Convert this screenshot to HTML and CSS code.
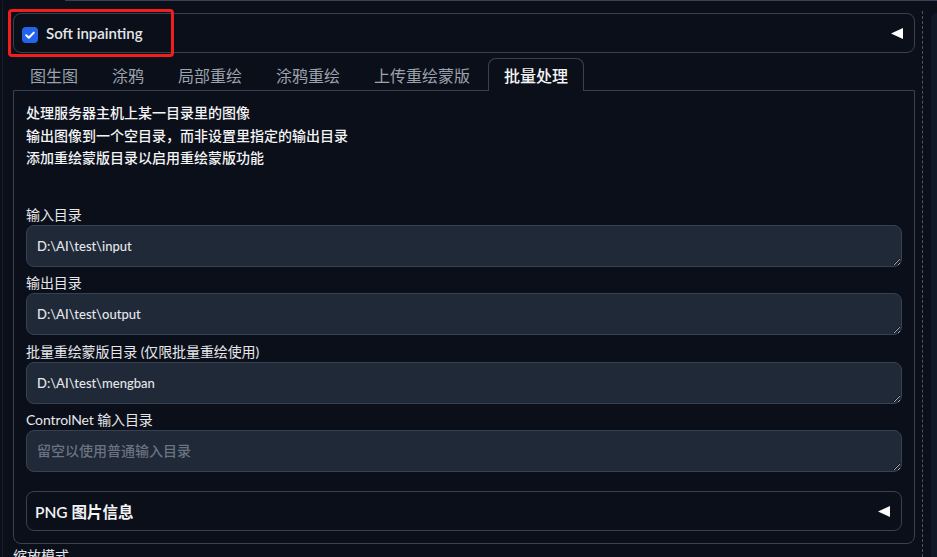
FILE: index.html
```html
<!DOCTYPE html>
<html lang="zh">
<head>
<meta charset="utf-8">
<title>批量处理</title>
<link rel="stylesheet" href="styles.css">
</head>
<body>
<div class="page">
  <div class="top-edge"></div>
  <div class="row">
    <div class="left-strip"></div>
    <main class="main">
      <div class="accordion soft">
        <label class="check-label">
          <span class="checkbox">
            <svg viewBox="0 0 16 16" width="16" height="16"><path d="M4.2 8.3 L6.8 10.8 L11.8 5.6" fill="none" stroke="#fff" stroke-width="2" stroke-linecap="round" stroke-linejoin="round"/></svg>
          </span>
          <span class="check-text">Soft inpainting</span>
        </label>
        <svg class="caret" viewBox="0 0 12 11" width="12" height="11"><polygon points="0,5.5 12,0 12,11" fill="#fff"/></svg>
        <div class="highlight"></div>
      </div>

      <nav class="tabs">
        <button class="tab">图生图</button>
        <button class="tab">涂鸦</button>
        <button class="tab">局部重绘</button>
        <button class="tab">涂鸦重绘</button>
        <button class="tab">上传重绘蒙版</button>
        <button class="tab active">批量处理</button>
      </nav>

      <section class="panel">
        <div class="desc">
          <p>处理服务器主机上某一目录里的图像</p>
          <p>输出图像到一个空目录，而非设置里指定的输出目录</p>
          <p>添加重绘蒙版目录以启用重绘蒙版功能</p>
        </div>
        <div class="fields">
          <label class="field">
            <span class="field-label">输入目录</span>
            <textarea class="input" rows="1">D:\AI\test\input</textarea>
          </label>
          <label class="field">
            <span class="field-label">输出目录</span>
            <textarea class="input" rows="1">D:\AI\test\output</textarea>
          </label>
          <label class="field">
            <span class="field-label">批量重绘蒙版目录 (仅限批量重绘使用)</span>
            <textarea class="input" rows="1">D:\AI\test\mengban</textarea>
          </label>
          <label class="field">
            <span class="field-label">ControlNet 输入目录</span>
            <textarea class="input" rows="1" placeholder="留空以使用普通输入目录"></textarea>
          </label>
        </div>
        <div class="accordion png">
          <span class="png-title">PNG 图片信息</span>
          <svg class="caret" viewBox="0 0 12 11" width="12" height="11"><polygon points="0,5.5 12,0 12,11" fill="#fff"/></svg>
        </div>
      </section>
      <div class="next-label">缩放模式</div>
    </main>
    <div class="divider"></div>
    <aside class="side"></aside>
  </div>
</div>
</body>
</html>
```

FILE: styles.css
```css
* { box-sizing: border-box; }
html, body {
  margin: 0;
  padding: 0;
  background: #0b0f19;
  height: 557px;
  overflow: hidden;
}
body {
  font-family: "Lato", "Noto Sans CJK SC", "Noto Sans", sans-serif;
  color: #e5e7eb;
  font-size: 14px;
}
.page {
  display: flex;
  flex-direction: column;
  height: 557px;
}
.top-edge {
  height: 1px;
  margin-left: 65px;
  background: #374151;
  flex: none;
}
.row {
  display: flex;
  flex: 1;
  min-height: 0;
}
.left-strip {
  width: 3px;
  flex: none;
  border-right: 1px solid #161c28;
}
.main {
  width: 902px;
  margin-left: 10px;
  flex: none;
}
.accordion {
  position: relative;
  display: flex;
  align-items: center;
  justify-content: space-between;
  height: 40px;
  border: 1px solid #374151;
  border-radius: 8px;
}
.soft {
  margin-top: 12px;
  padding: 3px 11px 0 8px;
}
.check-label {
  display: flex;
  align-items: center;
  gap: 8px;
}
.checkbox {
  width: 16px;
  height: 16px;
  border-radius: 4px;
  background: #2563eb;
  display: flex;
}
.check-text {
  font-size: 15px;
  font-weight: 600;
  color: #e5e7eb;
  margin-top: -3px;
}
.caret { display: block; }
.soft .caret { margin-top: -3px; }
.highlight {
  position: absolute;
  left: -6px;
  top: -5px;
  width: 166px;
  height: 48px;
  border: 3px solid #f21d1d;
  border-radius: 4px;
  pointer-events: none;
}
.tabs {
  display: flex;
  gap: 2px;
  margin-top: 5px;
  padding-left: 1px;
  height: 32px;
}
.tab {
  font-family: "Noto Sans CJK SC", sans-serif;
  font-size: 16px;
  color: #9ca3af;
  background: transparent;
  border: 1px solid transparent;
  border-bottom: none;
  padding: 0 15px;
  height: 33px;
  line-height: 31px;
  margin: 0;
  border-radius: 8px 8px 0 0;
  cursor: pointer;
}
.tab.active {
  color: #f3f4f6;
  font-weight: 500;
  border-color: #374151;
  background: #0b0f19;
  position: relative;
  z-index: 1;
}
.panel {
  border: 1px solid #374151;
  border-radius: 0 0 8px 8px;
  padding: 10px 12px 12px;
}
.desc {
  font-family: "Noto Sans CJK SC", sans-serif;
  font-size: 14px;
  line-height: 22.5px;
  color: #f3f4f6;
  font-weight: 500;
  margin-bottom: 36px;
}
.desc p { margin: 0; }
.fields {
  display: flex;
  flex-direction: column;
  gap: 6.5px;
}
.field {
  display: flex;
  flex-direction: column;
}
.field-label {
  line-height: 20px;
  font-size: 14px;
  letter-spacing: -0.1px;
  color: #e5e7eb;
}
.input {
  display: block;
  width: 100%;
  height: 42px;
  resize: vertical;
  color-scheme: dark;
  background: #1f2937;
  border: 1px solid #374151;
  border-radius: 8px;
  padding: 10px 10px;
  font-family: "Lato", "Noto Sans CJK SC", sans-serif;
  font-size: 13px;
  font-weight: 500;
  line-height: 20px;
  color: #e5e7eb;
  outline: none;
  overflow: hidden;
}
.input::placeholder { color: #6b7280; font-size: 14px; }
.png {
  margin-top: 19px;
  padding: 0 11px 0 8px;
}
.png-title {
  font-size: 15.5px;
  font-weight: 600;
  color: #f3f4f6;
}
.next-label {
  margin-top: 2px;
  line-height: 20px;
  font-size: 14px;
  color: #e5e7eb;
}
.divider {
  flex: none;
  margin-left: 7px;
  margin-top: 10px;
  border-left: 1px dashed #4b5563;
}
.side {
  flex: 1;
  margin-left: 8px;
  margin-top: 12px;
  background: #111827;
  border-top-left-radius: 8px;
}
```
